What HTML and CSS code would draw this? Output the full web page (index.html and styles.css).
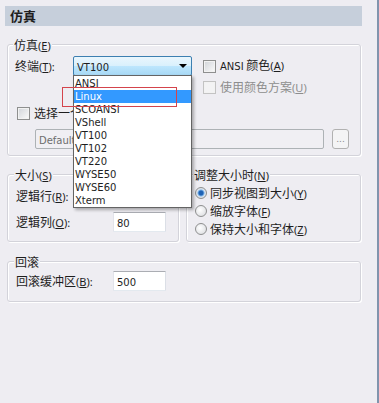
FILE: index.html
```html
<!DOCTYPE html>
<html lang="zh-CN">
<head>
  <meta charset="UTF-8" />
  <title>会话选项 - 仿真</title>
  <link rel="stylesheet" href="styles.css">
</head>
<body>

  <div class="title">仿真</div>

  <!-- 仿真 group -->
  <div class="group emu">
    <div class="group-title">仿真<span class="key">(<u>E</u>)</span></div>
    <div class="row row-term">
      <span class="label term-label">终端<span class="key">(<u>T</u>):</span></span>
      <div class="combo"><span class="latin">VT100</span><span class="arrow"></span></div>
      <span class="check ansi"><span class="box"></span><span><span class="latin">ANSI</span> 颜色<span class="key">(<u>A</u>)</span></span></span>
    </div>
    <div class="row row-scheme">
      <span class="check disabled"><span class="box"></span><span>使用颜色方案<span class="key">(<u>U</u>)</span></span></span>
    </div>
    <div class="row row-select">
      <span class="check"><span class="box"></span><span class="clip">选择一个颜色方案<span class="key">(<u>S</u>)</span></span></span>
    </div>
    <div class="row row-default">
      <div class="textbox disabled"><span class="latin">Default</span></div>
      <div class="dots">...</div>
    </div>
  </div>

  <div class="pair">
    <!-- 大小 group -->
    <div class="group size">
      <div class="group-title">大小<span class="key">(<u>S</u>)</span></div>
      <div class="row field first">
        <span class="label wide">逻辑行<span class="key">(<u>R</u>):</span></span>
        <div class="textbox"></div>
      </div>
      <div class="row field">
        <span class="label wide">逻辑列<span class="key">(<u>O</u>):</span></span>
        <div class="textbox"><span class="latin">80</span></div>
      </div>
    </div>

    <!-- 调整大小时 group -->
    <div class="group resize">
      <div class="group-title">调整大小时<span class="key">(<u>N</u>)</span></div>
      <div class="radio-row"><span class="radio checked"></span><span>同步视图到大小<span class="key">(<u>Y</u>)</span></span></div>
      <div class="radio-row"><span class="radio"></span><span>缩放字体<span class="key">(<u>F</u>)</span></span></div>
      <div class="radio-row"><span class="radio"></span><span>保持大小和字体<span class="key">(<u>Z</u>)</span></span></div>
    </div>
  </div>

  <!-- 回滚 group -->
  <div class="group scroll">
    <div class="group-title">回滚</div>
    <div class="row field">
      <span class="label wide">回滚缓冲区<span class="key">(<u>B</u>):</span></span>
      <div class="textbox"><span class="latin">500</span></div>
    </div>
  </div>

  <!-- open terminal list -->
  <div class="dropdown">
    <div class="item">ANSI</div>
    <div class="item selected">Linux</div>
    <div class="item">SCOANSI</div>
    <div class="item">VShell</div>
    <div class="item">VT100</div>
    <div class="item">VT102</div>
    <div class="item">VT220</div>
    <div class="item">WYSE50</div>
    <div class="item">WYSE60</div>
    <div class="item">Xterm</div>
  </div>

  <!-- red marker round the chosen item -->
  <div class="marker"></div>

</body>
</html>
```

FILE: styles.css
```css
/* Base */
* {
  margin: 0; padding: 0; box-sizing: border-box;
}
body {
  position: relative;
  width: 379px;
  height: 403px;
  padding: 6px 0 0 5px;
  overflow: hidden;
  background: #eeedf2;
  border-right: 2px solid #8194ad;
  font-family: "Noto Sans CJK SC", "Noto Sans", sans-serif;
  font-size: 12px;
  line-height: 14px;
  color: #1e1e1e;
  text-autospace: no-autospace;
}
u {
  text-decoration: underline;
  text-underline-offset: 1px;
}
.latin {
  font-family: "DejaVu Sans", sans-serif;
  font-size: 10px;
}
/* access key part, e.g. (E) */
.key {
  font-family: "Noto Sans", sans-serif;
  font-size: 11px;
}

/* Page title bar */
.title {
  width: 357px;
  height: 20px;
  line-height: 20px;
  padding-left: 5px;
  background: #c6cfdb;
  font-weight: bold;
  font-size: 13px;
}

/* Group boxes */
.group {
  margin-left: 2px;
  border: 1px solid #d3d3da;
  border-radius: 3px;
  box-shadow: inset 1px 1px 0 #fff, 1px 1px 0 #fff;
}
.group-title {
  width: fit-content;
  height: 14px;
  margin: -7px 0 0 -2px;
  padding: 0 1px;
  background: #eeedf2;
}
.emu {
  width: 354px;
  margin-top: 18px;
  padding: 0 6px 6px 7px;
}
.pair {
  display: flex;
  gap: 7px;
  margin: 18px 0 0 2px;
}
.pair .group {
  margin-left: 0;
}
.size {
  width: 172px;
  padding: 0 6px 9px 8px;
}
.resize {
  width: 175px;
  padding: 0 6px 0 8px;
}
.scroll {
  width: 354px;
  margin-top: 19px;
  padding: 0 6px 10px 8px;
}

/* Rows */
.row {
  display: flex;
  align-items: center;
}
.row-term { margin-top: 4px; }
.row-scheme { margin: 4px 0 0 188px; }
.row-select { margin: 11px 0 0 2px; }
.row-default { margin: 8px 0 0 20px; }
.size .field { margin-top: 6px; }
.size .field.first { margin-top: 4px; }
.scroll .field { margin-top: 2px; }

.term-label { width: 58px; }
.label.wide { width: 97px; }

/* Combo box (hot state) */
.combo {
  position: relative;
  width: 119px;
  height: 20px;
  padding-left: 3px;
  line-height: 18px;
  border: 1px solid #3c7fb1;
  border-radius: 2px;
  background: linear-gradient(#eaf6fd, #d9f0fc 50%, #bee6fd 50%, #a7d9f5);
}
.arrow {
  position: absolute;
  right: 4px;
  top: 7px;
  border-left: 4px solid transparent;
  border-right: 4px solid transparent;
  border-top: 4px solid #000;
}

/* Checkboxes */
.check {
  display: flex;
  align-items: center;
  gap: 4px;
  white-space: nowrap;
}
.check.ansi { margin-left: 11px; }
.check .box {
  flex: none;
  width: 13px;
  height: 13px;
  border: 1px solid #8e8f8f;
  background: linear-gradient(135deg, #d0d3d8, #fbfbfb);
  box-shadow: inset 0 0 0 1px #f2f2f2;
}
.check .clip {
  width: 39px;
  overflow: hidden;
}
.check.disabled {
  color: #8d8d8d;
}
.check.disabled .box {
  border-color: #c3c3c3;
  background: #f3f3f4;
}

/* Text boxes */
.textbox {
  width: 53px;
  height: 20px;
  padding-left: 3px;
  line-height: 18px;
  background: #fff;
  border: 1px solid;
  border-color: #abadb3 #dbdfe6 #e3e9ef #e2e3ea;
  border-radius: 1px;
}
.textbox.disabled {
  width: 289px;
  background: #f0eff3;
  border-color: #adb2b5;
  border-radius: 2px;
  color: #6d6d6d;
}
.dots {
  width: 17px;
  height: 20px;
  margin-left: 8px;
  border: 1px solid #b1b1b1;
  border-radius: 3px;
  background: #f4f4f5;
  color: #8a8a8a;
  font-family: "DejaVu Sans", sans-serif;
  font-size: 9px;
  line-height: 18px;
  text-align: center;
}

/* Radios */
.resize .group-title { margin-bottom: 2px; }
.radio-row {
  display: flex;
  align-items: center;
  gap: 3px;
  height: 18px;
  white-space: nowrap;
}
.radio {
  width: 12px;
  height: 12px;
  border: 1px solid #8e8f8f;
  border-radius: 50%;
  background: radial-gradient(circle at 40% 40%, #fff, #d6d8dc);
}
.radio.checked {
  background: radial-gradient(circle, #1f62b4 0 2px, #76aee6 3px, #dfe7ef 4px, #d6d8dc 6px);
}

/* Open list */
.dropdown {
  position: absolute;
  left: 73px;
  top: 75px;
  width: 119px;
  height: 133px;
  padding: 1px 0;
  background: #fff;
  border: 1px solid #646464;
  box-shadow: 2px 2px 3px rgba(0, 0, 0, 0.3);
  font-family: "DejaVu Sans", sans-serif;
  font-size: 10px;
}
.dropdown .item {
  height: 13px;
  line-height: 13px;
  padding-left: 1px;
}
.dropdown .item.selected {
  background: #3399ff;
  color: #fff;
}
.marker {
  position: absolute;
  left: 62px;
  top: 87px;
  width: 115px;
  height: 20px;
  border: 1px solid #d4444c;
}
```
